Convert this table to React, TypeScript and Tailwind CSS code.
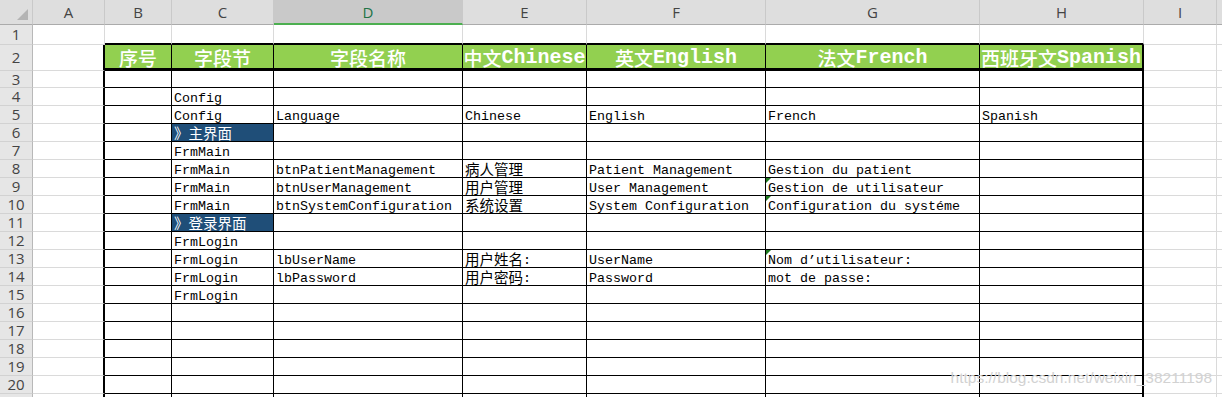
import React from 'react';

type Row = (string | null)[];

const colLetters = ['A', 'B', 'C', 'D', 'E', 'F', 'G', 'H', 'I'];

// B..H content per sheet row (index 0 = column B)
const data: Record<number, Row> = {
  2: ['序号', '字段节', '字段名称', '中文Chinese', '英文English', '法文French', '西班牙文Spanish'],
  4: [null, 'Config'],
  5: [null, 'Config', 'Language', 'Chinese', 'English', 'French', 'Spanish'],
  6: [null, '》主界面'],
  7: [null, 'FrmMain'],
  8: [null, 'FrmMain', 'btnPatientManagement', '病人管理', 'Patient Management', 'Gestion du patient'],
  9: [null, 'FrmMain', 'btnUserManagement', '用户管理', 'User Management', 'Gestion de utilisateur'],
  10: [null, 'FrmMain', 'btnSystemConfiguration', '系统设置', 'System Configuration', 'Configuration du systéme'],
  11: [null, '》登录界面'],
  12: [null, 'FrmLogin'],
  13: [null, 'FrmLogin', 'lbUserName', '用户姓名:', 'UserName', 'Nom d’utilisateur:'],
  14: [null, 'FrmLogin', 'lbPassword', '用户密码:', 'Password', 'mot de passe:'],
  15: [null, 'FrmLogin'],
};

// cells with the little green comment/error triangle
const flagged = new Set(['9-G', '10-G', '13-G']);
const sections = new Set(['6-C', '11-C']);

const isCjk = (ch: string) => /[\u3000-\u9fff\uff00-\uffef]/.test(ch);

const splitRuns = (s: string) => {
  const runs: { cjk: boolean; text: string }[] = [];
  for (const ch of s) {
    const c = isCjk(ch);
    const last = runs[runs.length - 1];
    if (last && last.cjk === c) last.text += ch;
    else runs.push({ cjk: c, text: ch });
  }
  return runs;
};

const CellText = ({ text, header }: { text: string; header?: boolean }) => (
  <>
    {splitRuns(text).map((r, i) =>
      r.cjk ? (
        <span
          key={i}
          className={
            header
              ? "font-['Noto_Sans_CJK_SC',sans-serif] text-[19px] leading-[20px] font-medium"
              : "inline-block -translate-y-[2px] font-['Noto_Sans_CJK_SC',sans-serif] text-[14.5px] leading-[13px]"
          }
        >
          {r.text}
        </span>
      ) : (
        <span key={i}>{r.text}</span>
      )
    )}
  </>
);

const rows = Array.from({ length: 21 }, (_, i) => i + 1);

export default function App() {
  return (
    <div className="relative h-[397px] w-[1222px] overflow-hidden bg-white font-['Liberation_Mono','Noto_Sans_CJK_SC',monospace] text-black">
      <div className="grid grid-cols-[33px_72px_67px_102px_189px_124px_179px_214px_164px_73px_1fr] grid-rows-[25px_20px_26px_17px_repeat(18,18px)]">
        {/* column headers */}
        <div className="relative border-r border-b border-r-[#c9c9c9] border-b-[#ababab] bg-[#dedede]">
          <svg className="absolute left-0 top-0" width="33" height="25" viewBox="0 0 33 25">
            <polygon points="28,9 28,20 17,20" fill="#b4b4b4" />
          </svg>
        </div>
        {colLetters.map((l) =>
          l === 'D' ? (
            <div
              key={l}
              className="flex items-center justify-center border-r border-b-2 border-r-[#c9c9c9] border-b-[#4caf50] bg-[#c9c9c9] pt-[2px] font-['Open_Sans',sans-serif] text-[15px] text-[#217346]"
            >
              {l}
            </div>
          ) : (
            <div
              key={l}
              className="flex items-center justify-center border-r border-b border-r-[#c9c9c9] border-b-[#ababab] bg-[#dedede] font-['Open_Sans',sans-serif] text-[15px] text-[#444]"
            >
              {l}
            </div>
          )
        )}
        <div className="border-b border-b-[#ababab] bg-[#dedede]" />

        {rows.map((r) => (
          <React.Fragment key={r}>
            <div className="flex items-center justify-center border-r border-b border-r-[#b8b8b8] border-b-[#d2d2d2] bg-[#e6e6e6] font-['Open_Sans',sans-serif] text-[15px] text-[#444]">
              {r}
            </div>
            {colLetters.map((l, c) => {
              const inTable = r >= 2 && c >= 1 && c <= 7;
              const key = `${r}-${l}`;
              const value = inTable ? data[r]?.[c - 1] ?? null : null;

              let right = 'border-r border-r-[#dadada]';
              if ((c === 0 || c === 7) && r >= 2) right = 'border-r-2 border-r-black';
              else if (inTable) right = 'border-r border-r-black';

              let bottom = 'border-b border-b-[#dadada]';
              if (r === 1 && c >= 1 && c <= 7) bottom = 'border-b-2 border-b-black';
              else if (r === 2 && inTable) bottom = 'border-b-[3px] border-b-black';
              else if (inTable) bottom = 'border-b border-b-black';

              if (r === 2 && inTable) {
                return (
                  <div
                    key={key}
                    className={`flex items-center justify-center whitespace-nowrap bg-[#92d050] pt-[3px] text-[20px] font-bold leading-[20px] text-white ${right} ${bottom}`}
                  >
                    {value && <CellText text={value} header />}
                  </div>
                );
              }

              const section = sections.has(key);
              return (
                <div
                  key={key}
                  className={`relative flex items-end whitespace-nowrap px-[2px] text-[13.33px] leading-[13px] ${right} ${bottom} ${
                    section ? 'bg-[#1f4e78] text-white' : ''
                  }`}
                >
                  {value && <CellText text={value} />}
                  {flagged.has(key) && (
                    <svg className="absolute left-0 top-0" width="5" height="5" viewBox="0 0 5 5">
                      <polygon points="0,0 5,0 0,5" fill="#1e7a1e" />
                    </svg>
                  )}
                </div>
              );
            })}
            <div className="border-b border-b-[#dadada]" />
          </React.Fragment>
        ))}
      </div>

      {/* blog watermark */}
      <div className="pointer-events-none absolute bottom-[8px] right-[10px] font-['Liberation_Sans',sans-serif] text-[15.5px] text-[#d2d2d2]">
        https://blog.csdn.net/weixin_38211198
      </div>
    </div>
  );
}
